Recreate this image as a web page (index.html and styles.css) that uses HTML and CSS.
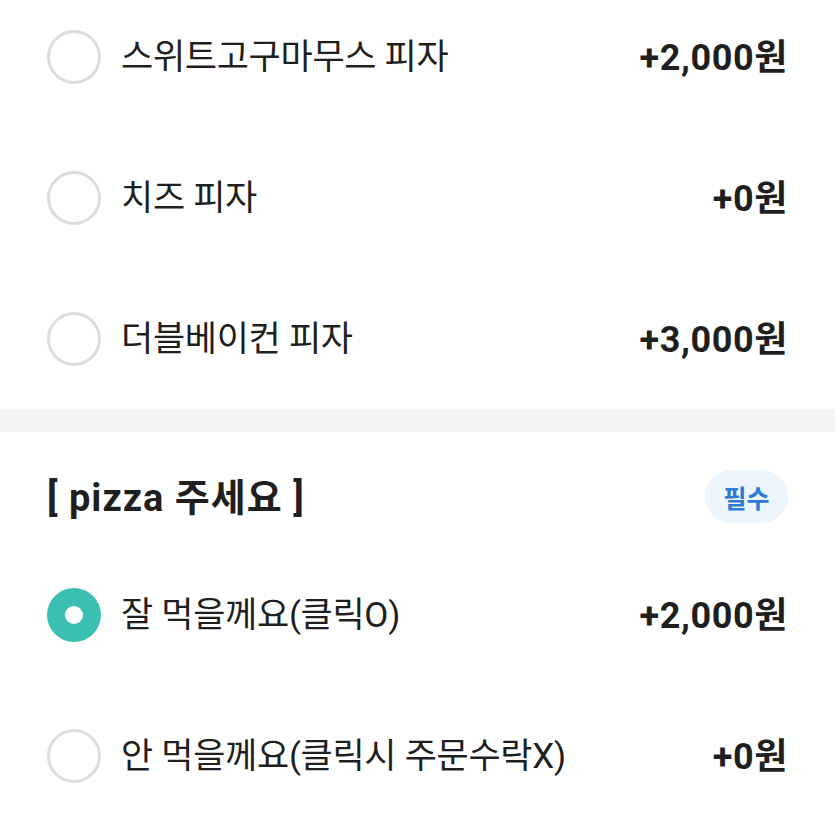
FILE: index.html
```html
<!DOCTYPE html>
<html lang="ko">
<head>
<meta charset="utf-8">
<link rel="stylesheet" href="styles.css">
</head>
<body>
<div class="page">
  <ul class="options first">
    <li class="option">
      <span class="radio"></span>
      <span class="label">스위트고구마무스 피자</span>
      <span class="price">+2,000원</span>
    </li>
    <li class="option">
      <span class="radio"></span>
      <span class="label">치즈 피자</span>
      <span class="price">+0원</span>
    </li>
    <li class="option">
      <span class="radio"></span>
      <span class="label">더블베이컨 피자</span>
      <span class="price">+3,000원</span>
    </li>
  </ul>
  <div class="divider"></div>
  <div class="group-head">
    <h2 class="group-title">[ pizza 주세요 ]</h2>
    <span class="badge">필수</span>
  </div>
  <ul class="options">
    <li class="option">
      <span class="radio checked"></span>
      <span class="label">잘 먹을께요(클릭O)</span>
      <span class="price">+2,000원</span>
    </li>
    <li class="option">
      <span class="radio"></span>
      <span class="label">안 먹을께요(클릭시 주문수락X)</span>
      <span class="price">+0원</span>
    </li>
  </ul>
</div>
</body>
</html>
```
FILE: styles.css
```css
html, body {
  margin: 0;
  padding: 0;
  background: #ffffff;
}
body {
  font-family: Roboto, "Noto Sans CJK KR", sans-serif;
  color: #1f1f1f;
  overflow: hidden;
  height: 825px;
}
.page {
  width: 835px;
}
.options {
  list-style: none;
  margin: 0;
  padding: 0 47px;
}
.options.first {
  margin-top: -14px;
}
.option {
  height: 141px;
  display: flex;
  align-items: center;
}
.radio {
  width: 54px;
  height: 54px;
  box-sizing: border-box;
  border: 3px solid #dcdcdc;
  border-radius: 50%;
  flex: none;
  display: flex;
  align-items: center;
  justify-content: center;
}
.radio.checked {
  border: none;
  background: #3cbfb3;
}
.radio.checked::after {
  content: "";
  width: 18px;
  height: 18px;
  border-radius: 50%;
  background: #ffffff;
}
.label {
  margin-left: 20px;
  font-size: 35px;
  font-weight: 400;
  flex: 1;
  letter-spacing: -0.3px;
  line-height: 1;
  padding-top: 2px;
}
.price {
  font-size: 36px;
  font-weight: 700;
  letter-spacing: 0.6px;
  line-height: 1;
  padding-top: 2px;
}
.divider {
  height: 23px;
  background: #f4f5f7;
}
.group-head {
  display: flex;
  align-items: center;
  justify-content: space-between;
  padding: 38px 47px 21px;
}
.group-title {
  margin: 0;
  font-size: 38px;
  font-weight: 700;
  letter-spacing: 1px;
  line-height: 1;
  padding-top: 2px;
}
.badge {
  width: 83px;
  height: 53px;
  border-radius: 27px;
  background: #eef6fd;
  color: #2a7ad6;
  font-size: 25px;
  font-weight: 700;
  display: flex;
  align-items: center;
  justify-content: center;
}
```
